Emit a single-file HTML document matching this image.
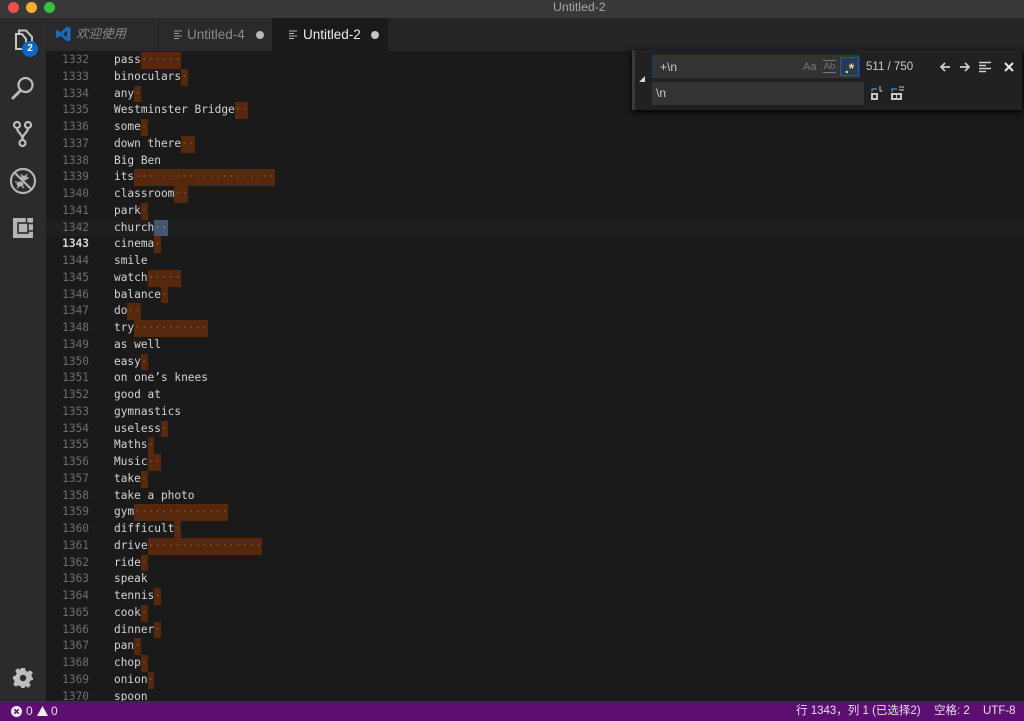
<!DOCTYPE html>
<html lang="zh">
<head>
<meta charset="utf-8">
<title>Untitled-2</title>
<style>
html,body{margin:0;padding:0;background:#1a1a1a;width:1024px;height:721px;overflow:hidden}
body{position:relative;font-family:"Liberation Sans","Noto Sans CJK SC",sans-serif;color:#ccc}
div,span,svg{box-sizing:border-box}
.abs{position:absolute}
#title{left:0;top:0;width:1024px;height:18px;background:#383838}
#title b{position:absolute;left:553px;top:0;font-weight:normal;font-size:12.3px;line-height:15px;color:#a8a8a8;white-space:nowrap}
.dot{position:absolute;top:2px;width:11px;height:11px;border-radius:50%}
#tabs{left:46px;top:18px;width:978px;height:33px;background:#252526}
.tab{position:absolute;top:0;height:33px;font-size:13.5px;line-height:33px;white-space:nowrap}
#act{left:0;top:18px;width:46px;height:683px;background:#2b2b2b}
#ed{left:46px;top:51px;width:978px;height:650px;background:#1a1a1a;overflow:hidden;filter:blur(.35px)}
.l{position:absolute;left:0;width:978px;height:16.75px;margin-top:.75px;font:11.15px/16.75px "DejaVu Sans Mono",monospace;white-space:pre;color:#d4d4d4}
.n{position:absolute;left:0;width:43px;text-align:right;color:#6e6e6e}
.t{position:absolute;left:68px}
.h{background:#56280e;color:#83532f;display:inline-block;height:16.75px;vertical-align:top}
.b{background:#46566e;color:#7a8aa0}
#status{left:0;top:701px;width:1024px;height:20px;background:#5c0f70;color:#e8dcec;font-size:11.5px;line-height:20px;white-space:nowrap}
#find{left:632px;top:50px;width:390px;height:60px;background:#212121;border-left:3px solid #3a3a3a;box-shadow:0 2px 6px #000}
</style>
</head>
<body>
<div class="abs" id="title"><b>Untitled-2</b>
<span class="dot" style="left:8px;background:#f0504c"></span>
<span class="dot" style="left:26px;background:#f5b02c"></span>
<span class="dot" style="left:44px;background:#35c23f"></span>
</div>

<div class="abs" id="tabs">
  <div class="tab" style="left:0;width:112px;background:#2a2a2a">
    <svg class="abs" style="left:10px;top:8px" width="15" height="16" viewBox="0 0 15 16"><path d="M11 0.5L14.5 2V14L11 15.5L4.5 9.5L1.5 12L0 11V5L1.5 4L4.5 6.5ZM11 4.5L7 8L11 11.5Z" fill="#1a6cc0"/></svg>
    <span class="abs" style="left:30px;top:0;font-style:italic;color:#8a8a8a;font-size:12.5px">欢迎使用</span>
  </div>
  <div class="tab" style="left:113px;width:113px;background:#2a2a2a;color:#8a8a8a">
    <svg class="abs" style="left:15px;top:12px" width="9" height="10" viewBox="0 0 9 10"><path d="M0 1H8M0 3.5H5M0 6H8M0 8.5H5" stroke="#999" stroke-width="1.1" fill="none"/></svg>
    <span class="abs" style="left:28px;top:0">Untitled-4</span>
    <span class="abs" style="left:97px;top:13px;width:8px;height:8px;border-radius:50%;background:#b8b8b8"></span>
  </div>
  <div class="tab" style="left:226px;width:116px;background:#1a1a1a;color:#ececec">
    <svg class="abs" style="left:17px;top:12px" width="9" height="10" viewBox="0 0 9 10"><path d="M0 1H8M0 3.5H5M0 6H8M0 8.5H5" stroke="#bbb" stroke-width="1.1" fill="none"/></svg>
    <span class="abs" style="left:31px;top:0">Untitled-2</span>
    <span class="abs" style="left:99px;top:13px;width:8px;height:8px;border-radius:50%;background:#c4c4c4"></span>
  </div>
</div>

<div class="abs" id="act">
  <svg class="abs" style="left:12px;top:11px" width="24" height="26" viewBox="0 0 24 26" fill="none" stroke="#c6c6c6" stroke-width="2"><path d="M4 5V20H14V10L10 5Z"/><path d="M7 4V1.5H14L20 8V17"/></svg>
  <div class="abs" style="left:22px;top:23px;width:16px;height:16px;border-radius:50%;background:#0e67c4;color:#fff;font-size:10px;font-weight:bold;line-height:16px;text-align:center">2</div>
  <svg class="abs" style="left:10px;top:57px" width="26" height="26" viewBox="0 0 26 26" fill="none" stroke="#bdbdbd"><circle cx="15.5" cy="10" r="7" stroke-width="2.2"/><path d="M10.5 15.5L3 23" stroke-width="3" stroke-linecap="round"/></svg>
  <svg class="abs" style="left:11px;top:102px" width="24" height="28" viewBox="0 0 24 28" fill="none" stroke="#bdbdbd" stroke-width="2.2"><circle cx="6" cy="5" r="3"/><circle cx="17" cy="5" r="3"/><circle cx="11.5" cy="23" r="3"/><path d="M6 8C6 13 11.5 13 11.5 20M17 8C17 13 11.5 13 11.5 20"/></svg>
  <svg class="abs" style="left:9px;top:149px" width="28" height="28" viewBox="0 0 28 28" fill="none" stroke="#b4b4b4" stroke-width="2.2"><circle cx="14" cy="14" r="12"/><path d="M5.5 5.5L22.5 22.5"/><ellipse cx="15" cy="11" rx="3.5" ry="2.5" fill="#b4b4b4" stroke="none"/><ellipse cx="11" cy="17" rx="3.5" ry="2.5" fill="#b4b4b4" stroke="none"/><path d="M12 7L13 9M18 7L17 9M20 11H18M6 15H8M8 21L10 19M15 21L13 19" stroke-width="1.3"/></svg>
  <svg class="abs" style="left:13px;top:200px" width="20" height="20" viewBox="0 0 20 20" fill="none"><rect x="0" y="0" width="20" height="20" fill="#b4b4b4"/><rect x="5" y="5" width="10" height="10" fill="#b4b4b4" stroke="#2b2b2b" stroke-width="1.6"/><path d="M13.5 0V5M15 5.5L20 5.5M15 13L20 13" stroke="#2b2b2b" stroke-width="1.4"/></svg>
  <svg class="abs" style="left:13px;top:650px" width="20" height="20" viewBox="0 0 20 20"><path d="M8 0H12L12.6 2.8L14.8 3.7L17.2 2.2L19.8 4.8L18.3 7.2L19.2 9.4L20 10V12L17.2 12.6L16.3 14.8L17.8 17.2L15.2 19.8L12.8 18.3L12 18.6L11.5 20H8.5L7.4 18.3L5.2 17.4L2.8 18.8L0.2 16.2L1.7 13.8L0.8 11.6L0 11V8.5L2.8 7.4L3.7 5.2L2.2 2.8L4.8 0.2L7.2 1.7L7.6 1.5Z" fill="#bdbdbd"/><circle cx="10" cy="10" r="3.2" fill="#2b2b2b"/></svg>
</div>

<div class="abs" id="ed">
<div class="abs" style="left:0;top:168.5px;width:978px;height:16.75px;background:#1f1f1f"></div>
<div class="l" style="top:0.25px"><span class="n">1332</span><span class="t">pass<span class="h">······</span></span></div>
<div class="l" style="top:17px"><span class="n">1333</span><span class="t">binoculars<span class="h">·</span></span></div>
<div class="l" style="top:33.75px"><span class="n">1334</span><span class="t">any<span class="h">·</span></span></div>
<div class="l" style="top:50.5px"><span class="n">1335</span><span class="t">Westminster Bridge<span class="h">··</span></span></div>
<div class="l" style="top:67.25px"><span class="n">1336</span><span class="t">some<span class="h">·</span></span></div>
<div class="l" style="top:84px"><span class="n">1337</span><span class="t">down there<span class="h">··</span></span></div>
<div class="l" style="top:100.75px"><span class="n">1338</span><span class="t">Big Ben</span></div>
<div class="l" style="top:117.5px"><span class="n">1339</span><span class="t">its<span class="h">·····················</span></span></div>
<div class="l" style="top:134.25px"><span class="n">1340</span><span class="t">classroom<span class="h">··</span></span></div>
<div class="l" style="top:151px"><span class="n">1341</span><span class="t">park<span class="h">·</span></span></div>
<div class="l" style="top:167.75px"><span class="n">1342</span><span class="t">church<span class="h b">··</span></span></div>
<div class="l" style="top:184.5px"><span class="n" style="color:#d4d4d4;font-weight:bold">1343</span><span class="t">cinema<span class="h">·</span></span></div>
<div class="l" style="top:201.25px"><span class="n">1344</span><span class="t">smile</span></div>
<div class="l" style="top:218px"><span class="n">1345</span><span class="t">watch<span class="h">·····</span></span></div>
<div class="l" style="top:234.75px"><span class="n">1346</span><span class="t">balance<span class="h">·</span></span></div>
<div class="l" style="top:251.5px"><span class="n">1347</span><span class="t">do<span class="h">··</span></span></div>
<div class="l" style="top:268.25px"><span class="n">1348</span><span class="t">try<span class="h">···········</span></span></div>
<div class="l" style="top:285px"><span class="n">1349</span><span class="t">as well</span></div>
<div class="l" style="top:301.75px"><span class="n">1350</span><span class="t">easy<span class="h">·</span></span></div>
<div class="l" style="top:318.5px"><span class="n">1351</span><span class="t">on one’s knees</span></div>
<div class="l" style="top:335.25px"><span class="n">1352</span><span class="t">good at</span></div>
<div class="l" style="top:352px"><span class="n">1353</span><span class="t">gymnastics</span></div>
<div class="l" style="top:368.75px"><span class="n">1354</span><span class="t">useless<span class="h">·</span></span></div>
<div class="l" style="top:385.5px"><span class="n">1355</span><span class="t">Maths<span class="h">·</span></span></div>
<div class="l" style="top:402.25px"><span class="n">1356</span><span class="t">Music<span class="h">··</span></span></div>
<div class="l" style="top:419px"><span class="n">1357</span><span class="t">take<span class="h">·</span></span></div>
<div class="l" style="top:435.75px"><span class="n">1358</span><span class="t">take a photo</span></div>
<div class="l" style="top:452.5px"><span class="n">1359</span><span class="t">gym<span class="h">··············</span></span></div>
<div class="l" style="top:469.25px"><span class="n">1360</span><span class="t">difficult<span class="h">·</span></span></div>
<div class="l" style="top:486px"><span class="n">1361</span><span class="t">drive<span class="h">·················</span></span></div>
<div class="l" style="top:502.75px"><span class="n">1362</span><span class="t">ride<span class="h">·</span></span></div>
<div class="l" style="top:519.5px"><span class="n">1363</span><span class="t">speak</span></div>
<div class="l" style="top:536.25px"><span class="n">1364</span><span class="t">tennis<span class="h">·</span></span></div>
<div class="l" style="top:553px"><span class="n">1365</span><span class="t">cook<span class="h">·</span></span></div>
<div class="l" style="top:569.75px"><span class="n">1366</span><span class="t">dinner<span class="h">·</span></span></div>
<div class="l" style="top:586.5px"><span class="n">1367</span><span class="t">pan<span class="h">·</span></span></div>
<div class="l" style="top:603.25px"><span class="n">1368</span><span class="t">chop<span class="h">·</span></span></div>
<div class="l" style="top:620px"><span class="n">1369</span><span class="t">onion<span class="h">·</span></span></div>
<div class="l" style="top:636.75px"><span class="n">1370</span><span class="t">spoon</span></div>
</div>

<div class="abs" id="find">
  <svg class="abs" style="left:4px;top:26px" width="7" height="7" viewBox="0 0 7 7"><path d="M6 0V6H0Z" fill="#d8d8d8"/></svg>
  <div class="abs" style="left:17px;top:5px;width:208px;height:23px;background:#333;border:1px solid #0f3f70;font-size:12px;line-height:22px;padding-left:7px;color:#ccc">+\n
    <span class="abs" style="left:150px;top:0;color:#777;font-size:11px">Aa</span>
    <span class="abs" style="left:170px;top:4px;width:13px;height:13px;border-top:1px solid #777;border-bottom:1px solid #777;color:#777;font-size:9.5px;line-height:12px;text-align:center">Ab</span>
    <span class="abs" style="left:187px;top:1px;width:19px;height:19px;border:1px solid #1c5ba8;background:#2a3a4f;color:#e8d8b0;font-size:14px;line-height:20px;text-align:center;font-weight:bold">.*</span>
  </div>
  <div class="abs" style="left:17px;top:32px;width:212px;height:23px;background:#333;font-size:12px;line-height:23px;padding-left:4px;color:#ccc">\n</div>
  <div class="abs" style="left:231px;top:10px;font-size:11.5px;line-height:14px;color:#ccc;white-space:nowrap">511 / 750</div>
  <svg class="abs" style="left:304px;top:11px" width="12" height="12" viewBox="0 0 12 12" fill="none" stroke="#d0d0d0" stroke-width="1.7"><path d="M11 6H2M6 2L2 6L6 10"/></svg>
  <svg class="abs" style="left:324px;top:11px" width="12" height="12" viewBox="0 0 12 12" fill="none" stroke="#d0d0d0" stroke-width="1.7"><path d="M1 6H10M6 2L10 6L6 10"/></svg>
  <svg class="abs" style="left:344px;top:11px" width="13" height="12" viewBox="0 0 13 12" fill="none" stroke="#d0d0d0" stroke-width="1.5"><path d="M0 1.5H12M0 4.5H7M0 7.5H12M0 10.5H7"/></svg>
  <svg class="abs" style="left:369px;top:12px" width="10" height="10" viewBox="0 0 10 10" fill="none" stroke="#e8e8e8" stroke-width="2"><path d="M1 1L9 9M9 1L1 9"/></svg>
  <svg class="abs" style="left:235px;top:36px" width="13" height="15" viewBox="0 0 13 15" fill="none"><path d="M2 6V3H7" stroke="#4a90d0" stroke-width="1.2"/><rect x="1" y="7" width="7" height="7" fill="#c8c8c8"/><rect x="3" y="9" width="3" height="3" fill="#212121"/><path d="M10 0V5H12.5" stroke="#c8c8c8"/></svg>
  <svg class="abs" style="left:255px;top:36px" width="15" height="15" viewBox="0 0 15 15" fill="none"><path d="M2 6V3H7" stroke="#4a90d0" stroke-width="1.2"/><rect x="1" y="7" width="11" height="7" fill="#c8c8c8"/><rect x="3" y="9" width="3" height="3" fill="#212121"/><rect x="7" y="9" width="3" height="3" fill="#212121"/><path d="M9 1H14M9 4H14" stroke="#c8c8c8"/></svg>
</div>

<div class="abs" id="status">
  <svg class="abs" style="left:11px;top:5px" width="11" height="11" viewBox="0 0 11 11"><circle cx="5.5" cy="5.5" r="5.5" fill="#eee"/><path d="M3.3 3.3L7.7 7.7M7.7 3.3L3.3 7.7" stroke="#5c0f70" stroke-width="1.5"/></svg>
  <span class="abs" style="left:26px;top:0;font-size:12px">0</span>
  <svg class="abs" style="left:37px;top:5px" width="11" height="10" viewBox="0 0 11 10"><path d="M5.5 0L11 10H0Z" fill="#eee"/></svg>
  <span class="abs" style="left:51px;top:0;font-size:12px">0</span>
  <span class="abs" style="left:796px;top:0">行 1343，列 1 (已选择2)</span>
  <span class="abs" style="left:934px;top:0">空格: 2</span>
  <span class="abs" style="left:983px;top:0">UTF-8</span>
</div>
</body>
</html>
